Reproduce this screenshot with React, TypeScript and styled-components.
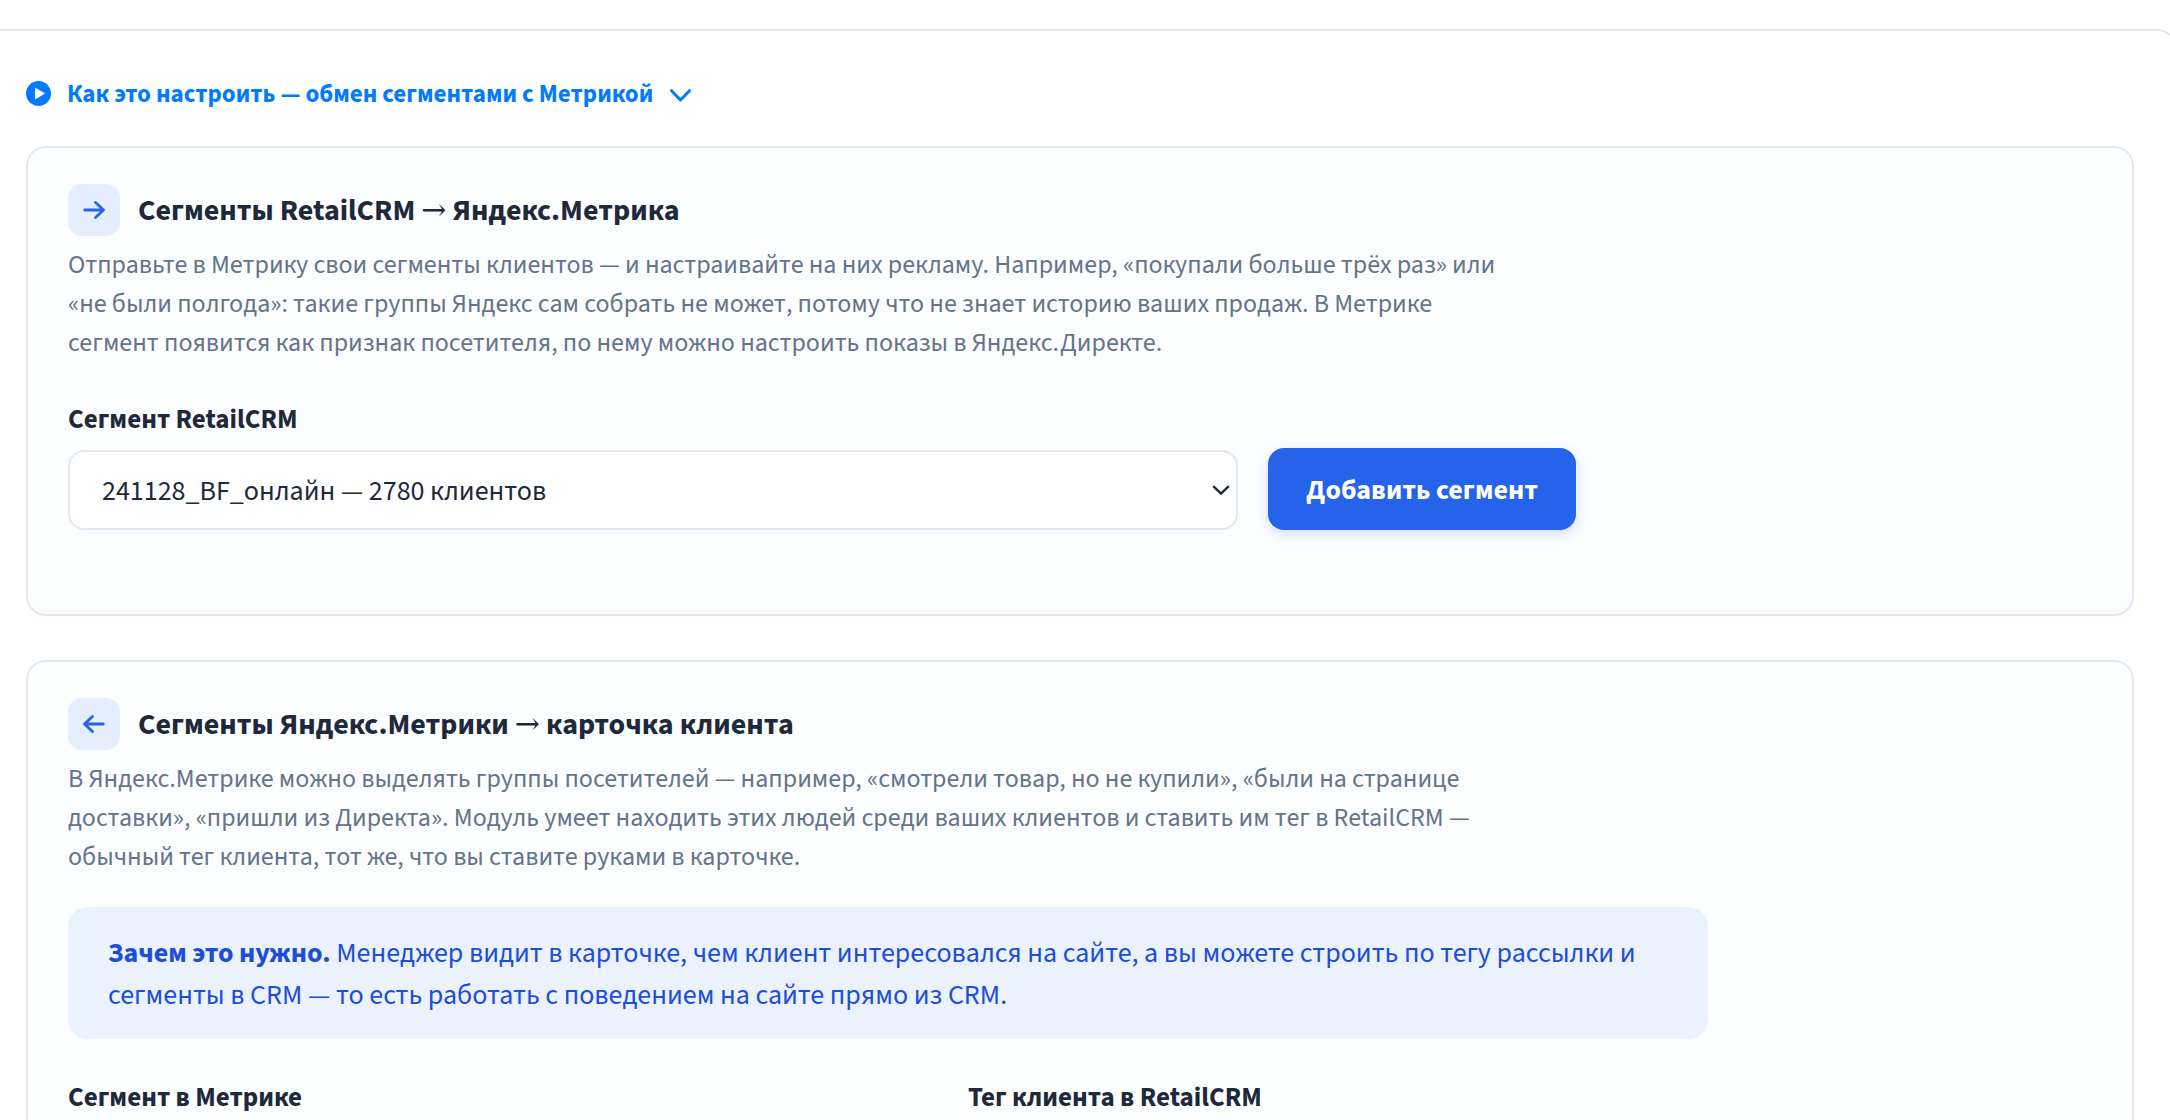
import React, { useState } from "react";
import styled, { createGlobalStyle } from "styled-components";

const color = {
  ink: "#1e293b",
  muted: "#64748b",
  line: "#e2e8f0",
  primary: "#2563eb",
  primaryDark: "#1d4ed8",
  link: "#007bff",
  card: "#fcfdff",
  iconBg: "#e6edfd",
  callout: "#ebf1fd",
};

const GlobalStyle = createGlobalStyle`
  *, *::before, *::after { box-sizing: border-box; }
  body {
    margin: 0;
    overflow-x: hidden;
    background: #fff;
    color: ${color.ink};
    font-family: "Source Sans 3", "Source Sans Pro", "Noto Sans", sans-serif;
  }
  button, select, input { font-family: inherit; }
`;

const Panel = styled.main`
  margin: 29px -10px 0 -20px;
  padding: 42px 44px 44px;
  border: 2px solid ${color.line};
  border-radius: 24px;
  background: #fff;
`;

const HelpToggle = styled.button`
  display: flex;
  align-items: center;
  gap: 16px;
  margin: 0 0 32px;
  padding: 0;
  height: 41px;
  border: 0;
  background: none;
  color: ${color.link};
  font-size: 25px;
  font-weight: 700;
  cursor: pointer;
`;

const Card = styled.section`
  padding: 36px 40px;
  border: 2px solid ${color.line};
  border-radius: 20px;
  background: ${color.card};

  & + & {
    margin-top: 44px;
  }
`;

const CardHeader = styled.header`
  display: flex;
  align-items: center;
  gap: 18px;
  margin-bottom: 9px;
`;

const IconBox = styled.span`
  display: grid;
  place-items: center;
  width: 52px;
  height: 52px;
  border-radius: 14px;
  background: ${color.iconBg};
  color: ${color.primary};
`;

const Title = styled.h2`
  margin: 0;
  padding-top: 2px;
  font-size: 30px;
  line-height: 40px;
  font-weight: 700;
`;

const TitleArrow = styled.span`
  font-family: "DejaVu Serif", serif;
  font-weight: 400;
  line-height: 1;
`;

const Lead = styled.p`
  max-width: 1440px;
  margin: 0;
  color: ${color.muted};
  font-size: 26px;
  line-height: 39px;
`;

const Callout = styled.p`
  max-width: 1640px;
  margin: 31px 0 0;
  padding: 25px 40px 23px;
  border-radius: 20px;
  background: ${color.callout};
  color: ${color.primaryDark};
  font-size: 28px;
  line-height: 42px;
`;

const FormRow = styled.div`
  display: flex;
  align-items: flex-end;
  gap: 30px;
  max-width: 1508px;
  margin-top: 40px;
`;

const FieldGrid = styled.div`
  display: grid;
  grid-template-columns: 1fr 1fr;
  gap: 40px;
  max-width: 1760px;
  margin-top: 41px;
`;

const Field = styled.div`
  flex: 1;
  min-width: 0;
`;

const Label = styled.label`
  display: block;
  margin-bottom: 12px;
  font-size: 27px;
  line-height: 36px;
  font-weight: 700;
`;

const SelectWrap = styled.div`
  position: relative;
  color: ${color.ink};
`;

const Select = styled.select`
  display: block;
  width: 100%;
  height: 80px;
  padding: 2px 48px 0 32px;
  border: 2px solid ${color.line};
  border-radius: 16px;
  background: #fff;
  color: inherit;
  font-size: 28px;
  appearance: none;
`;

const TextInput = styled.input`
  display: block;
  width: 100%;
  height: 80px;
  padding: 2px 32px 0;
  border: 2px solid ${color.line};
  border-radius: 16px;
  background: #fff;
  color: inherit;
  font-size: 28px;
`;

const SelectChevron = styled.svg`
  position: absolute;
  top: 50%;
  right: 8px;
  transform: translateY(-50%);
  pointer-events: none;
`;

const PrimaryButton = styled.button`
  height: 82px;
  padding: 2px 38px 0;
  border: 0;
  border-radius: 16px;
  background: ${color.primary};
  box-shadow: 0 4px 12px rgba(37, 99, 235, 0.2);
  color: #fff;
  font-size: 28px;
  font-weight: 700;
  white-space: nowrap;
  cursor: pointer;
`;

const Status = styled.div`
  min-height: 48px;
`;

function PlayIcon() {
  return (
    <svg width="25" height="25" viewBox="0 0 25 25" aria-hidden="true">
      <circle cx="12.5" cy="12.5" r="12.5" fill="currentColor" />
      <path d="M9.5 7.3v10.4l8.9-5.2z" fill="#fff" stroke="#fff" strokeWidth="1" strokeLinejoin="round" />
    </svg>
  );
}

function ToggleChevron() {
  return (
    <svg width="24" height="24" viewBox="0 0 24 24" fill="none" aria-hidden="true">
      <path d="M2.5 8.7l9 9.3 9-9.3" stroke="currentColor" strokeWidth="3" strokeLinecap="round" strokeLinejoin="round" />
    </svg>
  );
}

function ArrowIcon({ back }: { back?: boolean }) {
  return (
    <svg width="26" height="26" viewBox="0 0 26 26" fill="none" aria-hidden="true">
      <path
        d={back ? "M22.2 13H3.5M11.5 5.4L3.5 13l8 7.6" : "M3.8 13h18.7M14.5 5.4l8 7.6-8 7.6"}
        stroke="currentColor"
        strokeWidth="2.8"
        strokeLinecap="round"
        strokeLinejoin="round"
      />
    </svg>
  );
}

export default function App() {
  const [segment, setSegment] = useState("bf");
  const [metrikaSegment, setMetrikaSegment] = useState("");
  const [tag, setTag] = useState("");

  return (
    <>
      <GlobalStyle />
      <Panel>
        <HelpToggle type="button" aria-expanded="false">
          <PlayIcon />
          <span>Как это настроить — обмен сегментами с Метрикой</span>
          <ToggleChevron />
        </HelpToggle>

        <Card>
          <CardHeader>
            <IconBox>
              <ArrowIcon />
            </IconBox>
            <Title>
              Сегменты RetailCRM <TitleArrow>→</TitleArrow> Яндекс.Метрика
            </Title>
          </CardHeader>
          <Lead>
            Отправьте в Метрику свои сегменты клиентов — и настраивайте на них рекламу. Например, «покупали больше
            трёх раз» или «не были полгода»: такие группы Яндекс сам собрать не может, потому что не знает историю
            ваших продаж. В Метрике сегмент появится как признак посетителя, по нему можно настроить показы в
            Яндекс.Директе.
          </Lead>
          <FormRow>
            <Field>
              <Label htmlFor="crm-segment">Сегмент RetailCRM</Label>
              <SelectWrap>
                <Select id="crm-segment" value={segment} onChange={(e) => setSegment(e.target.value)}>
                  <option value="bf">241128_BF_онлайн — 2780 клиентов</option>
                </Select>
                <SelectChevron width="18" height="12" viewBox="0 0 18 12" fill="none" aria-hidden="true">
                  <path d="M1.2 2.2L9 9.6l7.8-7.4" stroke="currentColor" strokeWidth="2.4" />
                </SelectChevron>
              </SelectWrap>
            </Field>
            <PrimaryButton type="button">Добавить сегмент</PrimaryButton>
          </FormRow>
          <Status role="status" />
        </Card>

        <Card>
          <CardHeader>
            <IconBox>
              <ArrowIcon back />
            </IconBox>
            <Title>
              Сегменты Яндекс.Метрики <TitleArrow>→</TitleArrow> карточка клиента
            </Title>
          </CardHeader>
          <Lead>
            В Яндекс.Метрике можно выделять группы посетителей — например, «смотрели товар, но не купили», «были на
            странице доставки», «пришли из Директа». Модуль умеет находить этих людей среди ваших клиентов и ставить
            им тег в RetailCRM — обычный тег клиента, тот же, что вы ставите руками в карточке.
          </Lead>
          <Callout>
            <strong>Зачем это нужно.</strong> Менеджер видит в карточке, чем клиент интересовался на сайте, а вы
            можете строить по тегу рассылки и сегменты в CRM — то есть работать с поведением на сайте прямо из CRM.
          </Callout>
          <FieldGrid>
            <Field>
              <Label htmlFor="metrika-segment">Сегмент в Метрике</Label>
              <TextInput
                id="metrika-segment"
                value={metrikaSegment}
                onChange={(e) => setMetrikaSegment(e.target.value)}
              />
            </Field>
            <Field>
              <Label htmlFor="crm-tag">Тег клиента в RetailCRM</Label>
              <TextInput id="crm-tag" value={tag} onChange={(e) => setTag(e.target.value)} />
            </Field>
          </FieldGrid>
        </Card>
      </Panel>
    </>
  );
}
